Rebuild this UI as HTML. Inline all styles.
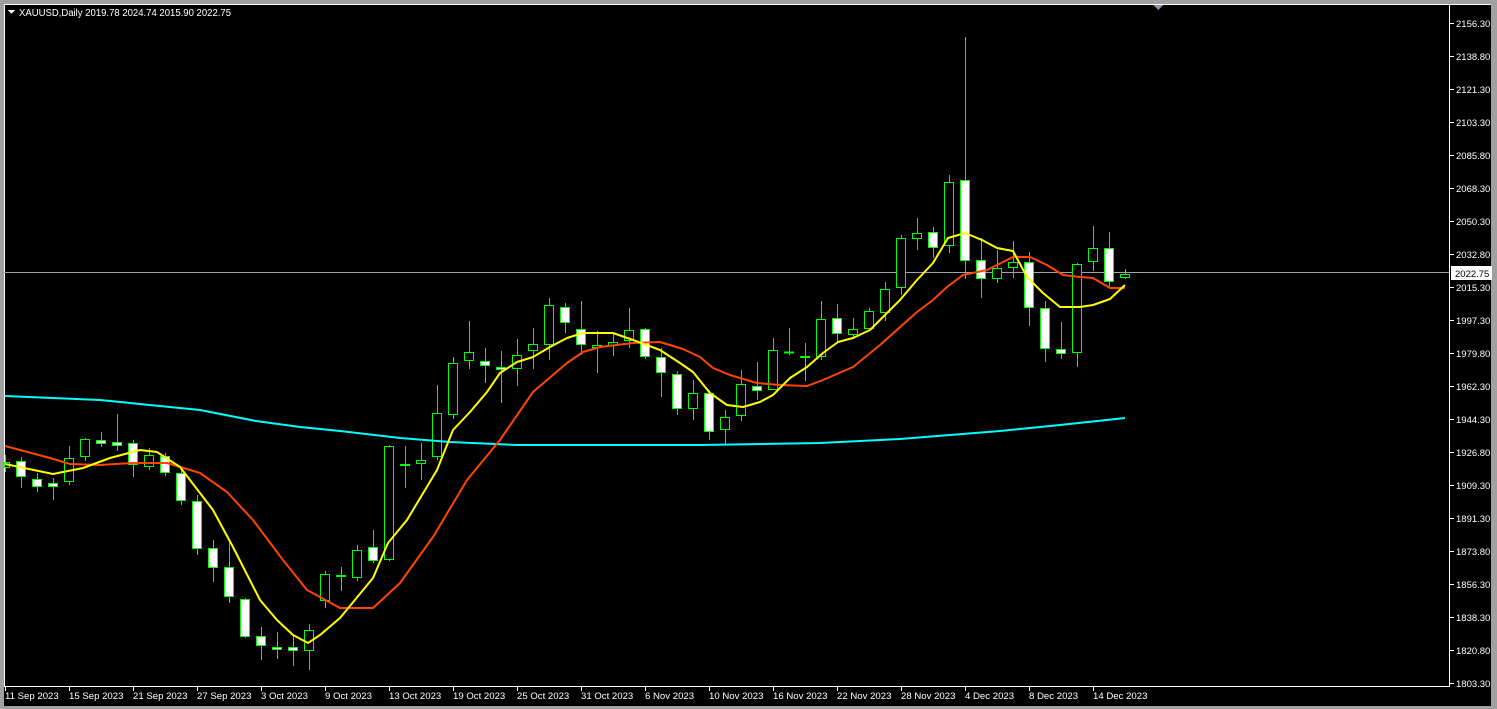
<!DOCTYPE html>
<html><head><meta charset="utf-8"><style>
html,body{margin:0;padding:0;background:#a0a0a0;}
svg{display:block;font-family:"Liberation Sans",sans-serif;}
</style></head><body>
<svg width="1497" height="709" viewBox="0 0 1497 709" xmlns="http://www.w3.org/2000/svg" shape-rendering="crispEdges">
<rect x="0" y="0" width="1497" height="709" fill="#a0a0a0"/>
<rect x="4" y="4" width="1487" height="702" fill="#000"/>
<line x1="4" y1="4.5" x2="1491" y2="4.5" stroke="#fff"/>
<line x1="4.5" y1="4" x2="4.5" y2="687" stroke="#fff"/>
<line x1="1449.5" y1="4" x2="1449.5" y2="687" stroke="#fff"/>
<line x1="4" y1="686.5" x2="1450" y2="686.5" stroke="#fff"/>
<polygon points="1153,5 1163,5 1158,10" fill="#8898a8"/>
<text x="19" y="16" font-size="10" fill="#fff" textLength="212" lengthAdjust="spacingAndGlyphs">XAUUSD,Daily  2019.78 2024.74 2015.90 2022.75</text>
<polygon points="8,10 15,10 11.5,14" fill="#fff"/>
<line x1="4" y1="272.5" x2="1449" y2="272.5" stroke="#a0a4ac"/>
<g stroke="#00ff00" stroke-width="1">
<g id="wicks">
<line x1="5.5" y1="455" x2="5.5" y2="472"/>
<line x1="21.5" y1="457" x2="21.5" y2="488"/>
<line x1="37.5" y1="473" x2="37.5" y2="492"/>
<line x1="53.5" y1="478" x2="53.5" y2="500"/>
<line x1="69.5" y1="446" x2="69.5" y2="485"/>
<line x1="85.5" y1="438" x2="85.5" y2="461"/>
<line x1="101.5" y1="432" x2="101.5" y2="447"/>
<line x1="117.5" y1="414" x2="117.5" y2="451"/>
<line x1="133.5" y1="440" x2="133.5" y2="477"/>
<line x1="149.5" y1="448" x2="149.5" y2="470"/>
<line x1="165.5" y1="453" x2="165.5" y2="476"/>
<line x1="181.5" y1="470" x2="181.5" y2="505"/>
<line x1="197.5" y1="495" x2="197.5" y2="555"/>
<line x1="213.5" y1="540" x2="213.5" y2="582"/>
<line x1="229.5" y1="540" x2="229.5" y2="603"/>
<line x1="245.5" y1="598" x2="245.5" y2="638"/>
<line x1="261.5" y1="627" x2="261.5" y2="660"/>
<line x1="277.5" y1="632" x2="277.5" y2="659"/>
<line x1="293.5" y1="636" x2="293.5" y2="666"/>
<line x1="309.5" y1="624" x2="309.5" y2="670"/>
<line x1="325.5" y1="571" x2="325.5" y2="608"/>
<line x1="341.5" y1="567" x2="341.5" y2="591"/>
<line x1="357.5" y1="545" x2="357.5" y2="581"/>
<line x1="373.5" y1="530" x2="373.5" y2="563"/>
<line x1="389.5" y1="445" x2="389.5" y2="561"/>
<line x1="405.5" y1="446" x2="405.5" y2="488"/>
<line x1="421.5" y1="443" x2="421.5" y2="480"/>
<line x1="437.5" y1="385" x2="437.5" y2="460"/>
<line x1="453.5" y1="357" x2="453.5" y2="419"/>
<line x1="469.5" y1="321" x2="469.5" y2="369"/>
<line x1="485.5" y1="348" x2="485.5" y2="383"/>
<line x1="501.5" y1="351" x2="501.5" y2="403"/>
<line x1="517.5" y1="339" x2="517.5" y2="386"/>
<line x1="533.5" y1="328" x2="533.5" y2="369"/>
<line x1="549.5" y1="298" x2="549.5" y2="360"/>
<line x1="565.5" y1="303" x2="565.5" y2="333"/>
<line x1="581.5" y1="301" x2="581.5" y2="355"/>
<line x1="597.5" y1="331" x2="597.5" y2="373"/>
<line x1="613.5" y1="333" x2="613.5" y2="356"/>
<line x1="629.5" y1="308" x2="629.5" y2="348"/>
<line x1="645.5" y1="328" x2="645.5" y2="359"/>
<line x1="661.5" y1="348" x2="661.5" y2="397"/>
<line x1="677.5" y1="371" x2="677.5" y2="415"/>
<line x1="693.5" y1="380" x2="693.5" y2="420"/>
<line x1="709.5" y1="390" x2="709.5" y2="440"/>
<line x1="725.5" y1="410" x2="725.5" y2="445"/>
<line x1="741.5" y1="370" x2="741.5" y2="421"/>
<line x1="757.5" y1="362" x2="757.5" y2="400"/>
<line x1="773.5" y1="338" x2="773.5" y2="390"/>
<line x1="789.5" y1="328" x2="789.5" y2="355"/>
<line x1="805.5" y1="343" x2="805.5" y2="381"/>
<line x1="821.5" y1="301" x2="821.5" y2="360"/>
<line x1="837.5" y1="304" x2="837.5" y2="342"/>
<line x1="853.5" y1="318" x2="853.5" y2="339"/>
<line x1="869.5" y1="308" x2="869.5" y2="329"/>
<line x1="885.5" y1="282" x2="885.5" y2="321"/>
<line x1="901.5" y1="235" x2="901.5" y2="295"/>
<line x1="917.5" y1="218" x2="917.5" y2="250"/>
<line x1="933.5" y1="227" x2="933.5" y2="258"/>
<line x1="949.5" y1="175" x2="949.5" y2="253"/>
<line x1="965.5" y1="37" x2="965.5" y2="279"/>
<line x1="981.5" y1="238" x2="981.5" y2="298"/>
<line x1="997.5" y1="250" x2="997.5" y2="283"/>
<line x1="1013.5" y1="241" x2="1013.5" y2="278"/>
<line x1="1029.5" y1="252" x2="1029.5" y2="326"/>
<line x1="1045.5" y1="301" x2="1045.5" y2="362"/>
<line x1="1061.5" y1="322" x2="1061.5" y2="359"/>
<line x1="1077.5" y1="263" x2="1077.5" y2="367"/>
<line x1="1093.5" y1="226" x2="1093.5" y2="271"/>
<line x1="1109.5" y1="232" x2="1109.5" y2="287"/>
<line x1="1125.5" y1="269" x2="1125.5" y2="279"/>
</g>
<g fill="#000">
<rect x="4.5" y="462.5" width="5" height="5"/>
<rect x="64.5" y="458.5" width="9" height="23"/>
<rect x="80.5" y="439.5" width="9" height="17"/>
<rect x="144.5" y="455.5" width="9" height="11"/>
<rect x="304.5" y="630.5" width="9" height="20"/>
<rect x="320.5" y="574.5" width="9" height="26"/>
<rect x="352.5" y="550.5" width="9" height="27"/>
<rect x="384.5" y="446.5" width="9" height="113"/>
<rect x="416.5" y="460.5" width="9" height="3"/>
<rect x="432.5" y="413.5" width="9" height="43"/>
<rect x="448.5" y="363.5" width="9" height="51"/>
<rect x="464.5" y="352.5" width="9" height="8"/>
<rect x="512.5" y="355.5" width="9" height="13"/>
<rect x="528.5" y="344.5" width="9" height="6"/>
<rect x="544.5" y="305.5" width="9" height="39"/>
<rect x="592.5" y="345.5" width="9" height="2"/>
<rect x="608.5" y="342.5" width="9" height="3"/>
<rect x="624.5" y="330.5" width="9" height="10"/>
<rect x="688.5" y="393.5" width="9" height="15"/>
<rect x="720.5" y="417.5" width="9" height="12"/>
<rect x="736.5" y="384.5" width="9" height="31"/>
<rect x="768.5" y="350.5" width="9" height="39"/>
<rect x="816.5" y="319.5" width="9" height="37"/>
<rect x="848.5" y="329.5" width="9" height="5"/>
<rect x="864.5" y="311.5" width="9" height="17"/>
<rect x="880.5" y="289.5" width="9" height="23"/>
<rect x="896.5" y="238.5" width="9" height="49"/>
<rect x="912.5" y="233.5" width="9" height="5"/>
<rect x="944.5" y="182.5" width="9" height="63"/>
<rect x="992.5" y="268.5" width="9" height="10"/>
<rect x="1008.5" y="262.5" width="9" height="5"/>
<rect x="1072.5" y="264.5" width="9" height="88"/>
<rect x="1088.5" y="248.5" width="9" height="13"/>
<rect x="1120.5" y="274.5" width="9" height="3"/>
</g>
<g fill="#fff">
<rect x="16.5" y="461.5" width="9" height="15"/>
<rect x="32.5" y="479.5" width="9" height="7"/>
<rect x="48.5" y="483.5" width="9" height="3"/>
<rect x="96.5" y="440.5" width="9" height="3"/>
<rect x="112.5" y="442.5" width="9" height="3"/>
<rect x="128.5" y="443.5" width="9" height="21"/>
<rect x="160.5" y="456.5" width="9" height="16"/>
<rect x="176.5" y="473.5" width="9" height="27"/>
<rect x="192.5" y="501.5" width="9" height="47"/>
<rect x="208.5" y="548.5" width="9" height="19"/>
<rect x="224.5" y="567.5" width="9" height="29"/>
<rect x="240.5" y="599.5" width="9" height="37"/>
<rect x="256.5" y="636.5" width="9" height="9"/>
<rect x="272.5" y="647.5" width="9" height="2"/>
<rect x="288.5" y="647.5" width="9" height="3"/>
<rect x="336.5" y="575.5" width="9" height="1"/>
<rect x="368.5" y="547.5" width="9" height="13"/>
<rect x="400.5" y="464.5" width="9" height="1"/>
<rect x="480.5" y="361.5" width="9" height="4"/>
<rect x="496.5" y="367.5" width="9" height="2"/>
<rect x="560.5" y="307.5" width="9" height="15"/>
<rect x="576.5" y="329.5" width="9" height="15"/>
<rect x="640.5" y="329.5" width="9" height="27"/>
<rect x="656.5" y="357.5" width="9" height="15"/>
<rect x="672.5" y="374.5" width="9" height="34"/>
<rect x="704.5" y="393.5" width="9" height="38"/>
<rect x="752.5" y="386.5" width="9" height="4"/>
<rect x="784.5" y="352" width="9" height="1"/>
<rect x="800.5" y="356.5" width="9" height="1"/>
<rect x="832.5" y="318.5" width="9" height="15"/>
<rect x="928.5" y="232.5" width="9" height="15"/>
<rect x="960.5" y="180.5" width="9" height="80"/>
<rect x="976.5" y="260.5" width="9" height="18"/>
<rect x="1024.5" y="262.5" width="9" height="45"/>
<rect x="1040.5" y="308.5" width="9" height="40"/>
<rect x="1056.5" y="349.5" width="9" height="4"/>
<rect x="1104.5" y="248.5" width="9" height="33"/>
</g>
</g>
<g fill="none" stroke-width="2" shape-rendering="auto" stroke-linejoin="round">
<polyline stroke="#00ffff" points="5,396 100,400 200,410 256,421 300,427 340,431 400,438 450,442 517,445 700,445 820,443 900,439 1000,431 1060,425 1125,418"/>
<polyline stroke="#ff4500" points="5,446 50,458 70,464 100,465 133,463 167,463 200,473 227,492 253,520 283,560 307,590 320,597 340,608 373,608 400,583 433,537 467,480 500,440 533,392 567,363 583,352 600,347 633,343 660,342 683,349 700,357 713,368 730,375 757,383 780,385 807,386 823,380 853,367 880,345 917,312 933,300 947,287 963,275 987,270 1013,257 1030,257 1047,265 1063,275 1080,277 1093,278 1110,288 1125,288"/>
<polyline stroke="#ffff00" points="5,464 53,474 83,468 110,458 140,450 157,452 180,467 213,510 233,547 260,600 277,620 293,635 308,643 320,635 340,618 373,578 388,543 407,520 437,470 453,430 470,412 487,392 500,373 517,362 533,357 550,347 567,338 583,333 613,333 633,340 660,350 680,363 693,372 710,393 727,405 743,407 760,402 773,395 790,378 807,367 823,353 838,342 853,338 870,330 883,317 900,300 917,280 933,263 948,238 965,233 982,240 997,248 1013,251 1027,277 1043,293 1060,307 1080,307 1093,305 1110,299 1125,285"/>
</g>
<g stroke="#fff">
<line x1="1450" y1="23.5" x2="1454" y2="23.5"/><line x1="1450" y1="56.5" x2="1454" y2="56.5"/><line x1="1450" y1="89.5" x2="1454" y2="89.5"/><line x1="1450" y1="122.5" x2="1454" y2="122.5"/><line x1="1450" y1="155.5" x2="1454" y2="155.5"/><line x1="1450" y1="188.5" x2="1454" y2="188.5"/><line x1="1450" y1="221.5" x2="1454" y2="221.5"/><line x1="1450" y1="254.5" x2="1454" y2="254.5"/><line x1="1450" y1="287.5" x2="1454" y2="287.5"/><line x1="1450" y1="320.5" x2="1454" y2="320.5"/><line x1="1450" y1="353.5" x2="1454" y2="353.5"/><line x1="1450" y1="386.5" x2="1454" y2="386.5"/><line x1="1450" y1="419.5" x2="1454" y2="419.5"/><line x1="1450" y1="452.5" x2="1454" y2="452.5"/><line x1="1450" y1="485.5" x2="1454" y2="485.5"/><line x1="1450" y1="518.5" x2="1454" y2="518.5"/><line x1="1450" y1="551.5" x2="1454" y2="551.5"/><line x1="1450" y1="584.5" x2="1454" y2="584.5"/><line x1="1450" y1="617.5" x2="1454" y2="617.5"/><line x1="1450" y1="650.5" x2="1454" y2="650.5"/><line x1="1450" y1="683.5" x2="1454" y2="683.5"/>
<line x1="5.5" y1="687" x2="5.5" y2="691"/><line x1="69.5" y1="687" x2="69.5" y2="691"/><line x1="133.5" y1="687" x2="133.5" y2="691"/><line x1="197.5" y1="687" x2="197.5" y2="691"/><line x1="261.5" y1="687" x2="261.5" y2="691"/><line x1="325.5" y1="687" x2="325.5" y2="691"/><line x1="389.5" y1="687" x2="389.5" y2="691"/><line x1="453.5" y1="687" x2="453.5" y2="691"/><line x1="517.5" y1="687" x2="517.5" y2="691"/><line x1="581.5" y1="687" x2="581.5" y2="691"/><line x1="645.5" y1="687" x2="645.5" y2="691"/><line x1="709.5" y1="687" x2="709.5" y2="691"/><line x1="773.5" y1="687" x2="773.5" y2="691"/><line x1="837.5" y1="687" x2="837.5" y2="691"/><line x1="901.5" y1="687" x2="901.5" y2="691"/><line x1="965.5" y1="687" x2="965.5" y2="691"/><line x1="1029.5" y1="687" x2="1029.5" y2="691"/><line x1="1093.5" y1="687" x2="1093.5" y2="691"/>
</g>
<g font-size="9.5" fill="#fff">
<text x="1456" y="27">2156.30</text><text x="1456" y="60">2138.80</text><text x="1456" y="93">2121.30</text><text x="1456" y="126">2103.30</text><text x="1456" y="159">2085.80</text><text x="1456" y="192">2068.30</text><text x="1456" y="225">2050.30</text><text x="1456" y="258">2032.80</text><text x="1456" y="291">2015.30</text><text x="1456" y="324">1997.30</text><text x="1456" y="357">1979.80</text><text x="1456" y="390">1962.30</text><text x="1456" y="423">1944.30</text><text x="1456" y="456">1926.80</text><text x="1456" y="489">1909.30</text><text x="1456" y="522">1891.30</text><text x="1456" y="555">1873.80</text><text x="1456" y="588">1856.30</text><text x="1456" y="621">1838.30</text><text x="1456" y="654">1820.80</text><text x="1456" y="687">1803.30</text>
</g>
<g font-size="9.6" fill="#fff">
<text x="5" y="699">11 Sep 2023</text><text x="69" y="699">15 Sep 2023</text><text x="133" y="699">21 Sep 2023</text><text x="197" y="699">27 Sep 2023</text><text x="261" y="699">3 Oct 2023</text><text x="325" y="699">9 Oct 2023</text><text x="389" y="699">13 Oct 2023</text><text x="453" y="699">19 Oct 2023</text><text x="517" y="699">25 Oct 2023</text><text x="581" y="699">31 Oct 2023</text><text x="645" y="699">6 Nov 2023</text><text x="709" y="699">10 Nov 2023</text><text x="773" y="699">16 Nov 2023</text><text x="837" y="699">22 Nov 2023</text><text x="901" y="699">28 Nov 2023</text><text x="965" y="699">4 Dec 2023</text><text x="1029" y="699">8 Dec 2023</text><text x="1093" y="699">14 Dec 2023</text>
</g>
<rect x="1451" y="266" width="41" height="14" fill="#fff"/>
<text x="1455" y="277" font-size="9.5" fill="#000">2022.75</text>
</svg>
</body></html>
